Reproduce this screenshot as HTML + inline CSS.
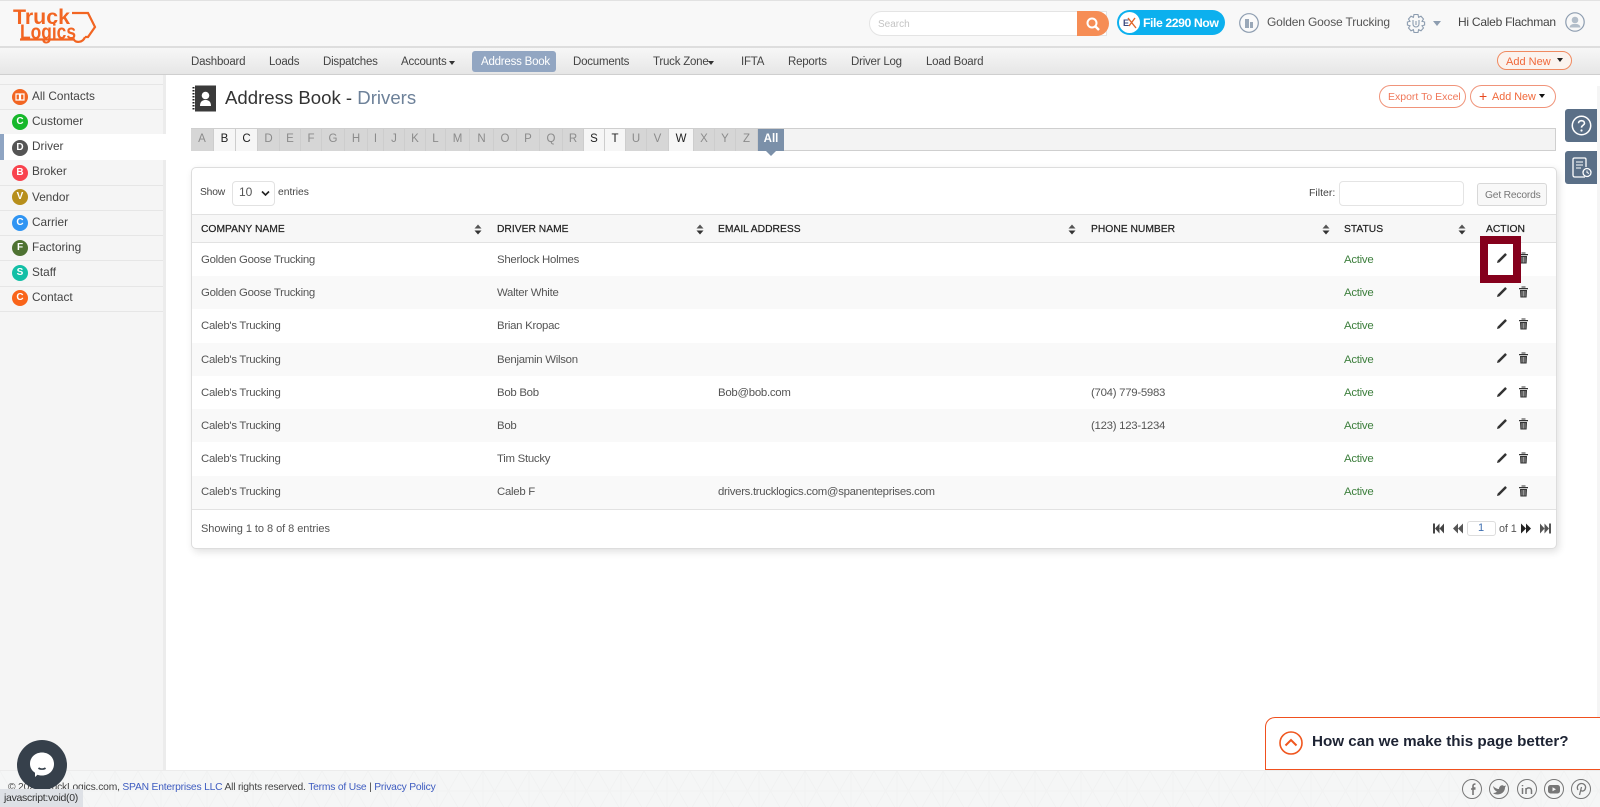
<!DOCTYPE html>
<html lang="en"><head><meta charset="utf-8"><title>Address Book - Drivers</title>
<style>
html,body{margin:0;padding:0;width:1600px;height:807px;overflow:hidden;background:#fff}
body{position:relative;font-family:"Liberation Sans",sans-serif;font-size:11.5px;color:#444}
.a{position:absolute}
.t{position:absolute;white-space:nowrap;line-height:16px}
.nav{font-size:11.5px;color:#444;top:54px;letter-spacing:-.22px}
.side{font-size:11.8px;color:#444;left:32px}
.ic{position:absolute;left:12px;width:16px;height:16px;border-radius:50%;color:#fff;font-size:10px;font-weight:bold;text-align:center;line-height:16px}
.sep{position:absolute;left:0;width:163px;height:1px;background:#e6e6e6}
.l{position:absolute;top:129px;height:22px;line-height:21px;text-align:center;font-size:11.5px;background:#d6d6d6;color:#8b8b8b;border-right:1px solid #cdcdcd;box-sizing:border-box}
.l.on{background:#f6f6f6;color:#222}
.h{font-size:10.3px;color:#222;top:222px;-webkit-text-stroke:.2px #222}
.c{font-size:11.4px;color:#555;letter-spacing:-.27px}
.s{position:absolute;top:224px;width:8px;height:11px}
.p{position:absolute;width:12px;height:12px}
.g{color:#3d7f3d}
a{color:#3e5cc0;text-decoration:none}
</style></head><body>

<!-- header -->
<div class="a" style="left:0;top:0;width:1600px;height:46px;background:#f8f8f8;border-top:1px solid #e2e2e2;box-sizing:border-box"></div>
<div class="a" style="left:0;top:46px;width:1600px;height:2px;background:#dedede"></div>
<div class="a" style="left:0;top:48px;width:1600px;height:27px;background:linear-gradient(#f7f7f7,#e6e6e6);border-bottom:1px solid #cfcfcf;box-sizing:border-box"></div>

<!-- logo -->
<svg class="a" style="left:10px;top:3px" width="92" height="42" viewBox="0 0 92 42">
<text x="3" y="21" font-family="Liberation Sans" font-weight="bold" font-size="21" fill="#f26522" textLength="57" lengthAdjust="spacingAndGlyphs">Truck</text>
<text x="10" y="36" font-family="Liberation Sans" font-weight="bold" font-size="21" fill="#f26522" textLength="56" lengthAdjust="spacingAndGlyphs">Logics</text>
<path d="M62 10H78L85 24L78 34H75M10 36.5H64C65 40 73 40 75 34" fill="none" stroke="#f26522" stroke-width="2.2"/>
</svg>

<!-- search -->
<div class="a" style="left:869px;top:11px;width:238px;height:25px;background:#fff;border:1px solid #e4e4e4;border-radius:13px 0 0 13px;box-sizing:border-box"></div>
<div class="t" style="left:878px;top:17px;font-size:10px;color:#c4c4c4">Search</div>
<div class="a" style="left:1077px;top:11px;width:32px;height:25px;background:#f68d55;border-radius:0 13px 13px 0"></div>
<svg class="a" style="left:1085px;top:16px" width="16" height="16" viewBox="0 0 16 16"><circle cx="7" cy="7" r="4.5" fill="none" stroke="#fff" stroke-width="2"/><path d="M10.5 10.5L14 14" stroke="#fff" stroke-width="2.4"/></svg>

<!-- file 2290 -->
<div class="a" style="left:1117px;top:10px;width:108px;height:25px;background:#0cb0ee;border-radius:13px"></div>
<svg class="a" style="left:1119px;top:12px" width="21" height="21" viewBox="0 0 21 21"><circle cx="10.5" cy="10.5" r="10.5" fill="#fff"/><text x="4" y="14" font-family="Liberation Sans" font-size="9" font-weight="bold" fill="#3a4a80">E</text><path d="M9 6L17 16M16 6L10 14" stroke="#e0662a" stroke-width="1.4"/></svg>
<div class="t" style="left:1143px;top:15px;font-size:12.3px;font-weight:bold;color:#fff;letter-spacing:-.45px">File 2290 Now</div>

<svg class="a" style="left:1239px;top:13px" width="20" height="20" viewBox="0 0 20 20"><circle cx="10" cy="10" r="9.3" fill="#fff" fill-opacity=".3" stroke="#8d9db0" stroke-width="1.2"/><path d="M6 15V6H10V15ZM11 15V9H14V15Z" fill="#9aa8b8"/></svg>
<div class="t" style="left:1267px;top:14px;font-size:12px;color:#555;letter-spacing:-.15px">Golden Goose Trucking</div>

<svg class="a" style="left:1406px;top:13px" width="20" height="21" viewBox="0 0 20 21" fill="none" stroke="#8d9db0" stroke-width="1.1"><path d="M8 1.5H12L12.6 4.3L15 3.2L17.5 6L16 8.3L18.6 9V12L16 12.8L17.5 15L15 17.8L12.6 16.7L12 19.5H8L7.4 16.7L5 17.8L2.5 15L4 12.8L1.4 12V9L4 8.3L2.5 6L5 3.2L7.4 4.3Z"/><path d="M7 7V11A3 3 0 0 0 13 11V7"/><path d="M10 8V12"/></svg>
<div class="a" style="left:1433px;top:21px;width:0;height:0;border-left:4px solid transparent;border-right:4px solid transparent;border-top:5px solid #8d9db0"></div>
<div class="t" style="left:1458px;top:14px;font-size:12px;color:#444;letter-spacing:-.25px">Hi Caleb Flachman</div>
<svg class="a" style="left:1565px;top:12px" width="20" height="20" viewBox="0 0 20 20"><circle cx="10" cy="10" r="9.2" fill="none" stroke="#8d9db0" stroke-width="1.2"/><circle cx="10" cy="8" r="3.3" fill="#b2bdc9"/><path d="M4.5 15.5C5 12 8 12 10 12S15 12 15.5 15.5Z" fill="#b2bdc9"/></svg>

<!-- nav -->
<div class="t nav" style="left:191px">Dashboard</div>
<div class="t nav" style="left:269px">Loads</div>
<div class="t nav" style="left:323px">Dispatches</div>
<div class="t nav" style="left:401px">Accounts</div>
<div class="a" style="left:449px;top:61px;width:0;height:0;border-left:3.5px solid transparent;border-right:3.5px solid transparent;border-top:4px solid #333"></div>
<div class="a" style="left:472px;top:51px;width:84px;height:21px;background:#92a6c2;border-radius:3px"></div>
<div class="t nav" style="left:481px;color:#fff">Address Book</div>
<div class="t nav" style="left:573px">Documents</div>
<div class="t nav" style="left:653px">Truck Zone</div>
<div class="a" style="left:708px;top:61px;width:0;height:0;border-left:3.5px solid transparent;border-right:3.5px solid transparent;border-top:4px solid #333"></div>
<div class="t nav" style="left:741px">IFTA</div>
<div class="t nav" style="left:788px">Reports</div>
<div class="t nav" style="left:851px">Driver Log</div>
<div class="t nav" style="left:926px">Load Board</div>
<div class="a" style="left:1497px;top:51px;width:75px;height:19px;border:1px solid #f08a60;border-radius:10px;box-sizing:border-box;background:#fbf3ee"></div>
<div class="t" style="left:1506px;top:54px;font-size:11px;color:#f0683a">Add New</div>
<div class="a" style="left:1557px;top:58px;width:0;height:0;border-left:3.5px solid transparent;border-right:3.5px solid transparent;border-top:4px solid #222"></div>

<!-- sidebar -->
<div class="a" style="left:0;top:75px;width:166px;height:695px;background:#f5f5f5;border-right:3px solid #ececec;box-sizing:border-box"></div>
<div class="sep" style="top:84px"></div><div class="sep" style="top:109px"></div><div class="sep" style="top:185px"></div><div class="sep" style="top:210px"></div><div class="sep" style="top:235px"></div><div class="sep" style="top:260px"></div><div class="sep" style="top:286px"></div><div class="sep" style="top:311px"></div>
<div class="a" style="left:0;top:134px;width:166px;height:26px;background:#fff"></div>
<div class="a" style="left:0;top:134px;width:4px;height:26px;background:#8fa5c3"></div>

<div class="ic" style="top:89px;background:#f26522"></div>
<svg class="a" style="left:15px;top:93px" width="10" height="8" viewBox="0 0 10 8"><path d="M1 1H4.5V7H1ZM5.5 1H9V7H5.5Z" fill="none" stroke="#fff" stroke-width="1.2"/></svg>
<div class="t side" style="top:88px">All Contacts</div>
<div class="ic" style="top:114px;background:#17b82b">C</div><div class="t side" style="top:113px">Customer</div>
<div class="ic" style="top:140px;background:#555">D</div><div class="t side" style="top:138px">Driver</div>
<div class="ic" style="top:165px;background:#f9434e">B</div><div class="t side" style="top:163px">Broker</div>
<div class="ic" style="top:189px;background:#b78f1c">V</div><div class="t side" style="top:189px">Vendor</div>
<div class="ic" style="top:215px;background:#2f94f3">C</div><div class="t side" style="top:214px">Carrier</div>
<div class="ic" style="top:240px;background:#4e7232">F</div><div class="t side" style="top:239px">Factoring</div>
<div class="ic" style="top:265px;background:#13bfa6">S</div><div class="t side" style="top:264px">Staff</div>
<div class="ic" style="top:290px;background:#f9641a">C</div><div class="t side" style="top:289px">Contact</div>

<!-- title -->
<svg class="a" style="left:192px;top:85px" width="25" height="27" viewBox="0 0 25 27"><rect x="3" y="0.5" width="21" height="26" fill="#3a3a3a"/><path d="M1.5 2V25" stroke="#222" stroke-width="2" stroke-dasharray="1.5 1.5"/><circle cx="13.5" cy="10.5" r="3.8" fill="#fff"/><path d="M8 21C8 16 11 15 13.5 15S19 16 19 21Z" fill="#fff"/></svg>
<div class="t" style="left:225px;top:88px;font-size:18.6px;line-height:20px;color:#333">Address Book - <span style="color:#6d8199">Drivers</span></div>

<div class="a" style="left:1379px;top:85px;width:87px;height:23px;border:1px solid #f0947a;border-radius:12px;box-sizing:border-box"></div>
<div class="t" style="left:1388px;top:89px;font-size:10.5px;color:#f0785a">Export To Excel</div>
<div class="a" style="left:1470px;top:85px;width:86px;height:23px;border:1px solid #f0947a;border-radius:12px;box-sizing:border-box"></div>
<div class="t" style="left:1479px;top:88px;font-size:14px;color:#e8481f">+</div>
<div class="t" style="left:1492px;top:89px;font-size:10.8px;color:#f0683a">Add New</div>
<div class="a" style="left:1539px;top:94px;width:0;height:0;border-left:3.5px solid transparent;border-right:3.5px solid transparent;border-top:4px solid #111"></div>

<!-- side buttons -->
<div class="a" style="left:1597px;top:86px;width:3px;height:684px;background:#f5f5f5"></div>
<div class="a" style="left:1565px;top:109px;width:32px;height:33px;background:#5a6f87;border-radius:3px 0 0 3px"></div>
<svg class="a" style="left:1571px;top:115px" width="21" height="21" viewBox="0 0 21 21"><circle cx="10.5" cy="10.5" r="9.2" fill="none" stroke="#fff" stroke-width="1.5"/><path d="M7.5 8.2C7.5 4.8 13.5 4.8 13.5 8.2C13.5 10.3 10.5 10.3 10.5 12.6" fill="none" stroke="#fff" stroke-width="1.6"/><circle cx="10.5" cy="15.5" r="1.1" fill="#fff"/></svg>
<div class="a" style="left:1565px;top:151px;width:32px;height:33px;background:#5a6f87;border-radius:3px 0 0 3px"></div>
<svg class="a" style="left:1571px;top:157px" width="22" height="22" viewBox="0 0 22 22" fill="none" stroke="#fff" stroke-width="1.3"><path d="M14 20H4C2.5 20 2 19.5 2 18V2.5C2 1.5 2.5 1 3.5 1H13.5C14.5 1 15 1.5 15 2.5V10"/><path d="M5 5H12M5 8H12M5 11H10" stroke-width="1.1"/><circle cx="16" cy="15.5" r="4" fill="#5a6f87"/><path d="M16 13.5V15.5L18 16.5" stroke-width="1"/></svg>

<!-- alphabet -->
<div class="a" style="left:191px;top:128px;width:1365px;height:23px;background:#f3f3f3;border:1px solid #cfcfcf;box-sizing:border-box"></div>
<div class="l" style="left:191px;width:23px">A</div>
<div class="l on" style="left:214px;width:22px">B</div>
<div class="l on" style="left:236px;width:22px">C</div>
<div class="l" style="left:258px;width:22px">D</div>
<div class="l" style="left:280px;width:21px">E</div>
<div class="l" style="left:301px;width:21px">F</div>
<div class="l" style="left:322px;width:23px">G</div>
<div class="l" style="left:345px;width:23px">H</div>
<div class="l" style="left:368px;width:16px">I</div>
<div class="l" style="left:384px;width:21px">J</div>
<div class="l" style="left:405px;width:21px">K</div>
<div class="l" style="left:426px;width:20px">L</div>
<div class="l" style="left:446px;width:24px">M</div>
<div class="l" style="left:470px;width:24px">N</div>
<div class="l" style="left:494px;width:23px">O</div>
<div class="l" style="left:517px;width:23px">P</div>
<div class="l" style="left:540px;width:23px">Q</div>
<div class="l" style="left:563px;width:21px">R</div>
<div class="l on" style="left:584px;width:21px">S</div>
<div class="l on" style="left:605px;width:21px">T</div>
<div class="l" style="left:626px;width:21px">U</div>
<div class="l" style="left:647px;width:22px">V</div>
<div class="l on" style="left:669px;width:25px">W</div>
<div class="l" style="left:694px;width:21px">X</div>
<div class="l" style="left:715px;width:21px">Y</div>
<div class="l" style="left:736px;width:22px">Z</div>
<div class="l" style="left:758px;width:26px;background:#7b90a9;color:#fff;font-weight:bold;border:0">All</div>
<div class="a" style="left:766px;top:151px;width:0;height:0;border-left:5px solid transparent;border-right:5px solid transparent;border-top:5px solid #7b90a9"></div>

<!-- card -->
<div class="a" style="left:191px;top:167px;width:1366px;height:382px;background:#fff;border:1px solid #ddd;border-radius:5px;box-sizing:border-box;box-shadow:2px 3px 8px rgba(0,0,0,.12)"></div>
<div class="t" style="left:200px;top:185px;font-size:10.3px;color:#444;letter-spacing:-.2px">Show</div>
<div class="a" style="left:232px;top:181px;width:43px;height:25px;border:1px solid #e2e2e2;border-radius:4px;box-sizing:border-box"></div>
<div class="t" style="left:239px;top:184px;font-size:12px;color:#555">10</div>
<svg class="a" style="left:261px;top:190px" width="9" height="7" viewBox="0 0 9 7"><path d="M1 1.5L4.5 5L8 1.5" fill="none" stroke="#222" stroke-width="1.6"/></svg>
<div class="t" style="left:278px;top:185px;font-size:10.3px;color:#444">entries</div>
<div class="t" style="left:1309px;top:185px;font-size:10.5px;color:#444">Filter:</div>
<div class="a" style="left:1339px;top:181px;width:125px;height:25px;border:1px solid #e4e4e4;border-radius:4px;box-sizing:border-box"></div>
<div class="a" style="left:1477px;top:183px;width:70px;height:23px;border:1px solid #d8d8d8;border-radius:3px;box-sizing:border-box;background:#f8f8f8"></div>
<div class="t" style="left:1485px;top:188px;font-size:10.3px;color:#777;letter-spacing:-.2px">Get Records</div>

<div class="a" style="left:192px;top:214px;width:1364px;height:29px;background:#f7f7f7;border-top:1px solid #e2e2e2;border-bottom:1px solid #e2e2e2;box-sizing:border-box"></div>
<div class="t h" style="left:201px">COMPANY NAME</div>
<div class="t h" style="left:497px">DRIVER NAME</div>
<div class="t h" style="left:718px">EMAIL ADDRESS</div>
<div class="t h" style="left:1091px">PHONE NUMBER</div>
<div class="t h" style="left:1344px">STATUS</div>
<div class="t h" style="left:1486px">ACTION</div>
<svg width="0" height="0" style="position:absolute"><defs>
<g id="so"><path d="M4 0.5L7.5 4.5H0.5Z" fill="#555"/><path d="M4 10.5L7.5 6.5H0.5Z" fill="#333"/></g>
<g id="pe"><path d="M1 11L1.6 8.6L8.6 1.6C9 1.2 9.5 1.2 9.9 1.6L10.4 2.1C10.8 2.5 10.8 3 10.4 3.4L3.4 10.4Z" fill="#333"/></g>
<g id="tr"><path d="M3.5 1.5H7.5V.5H3.5ZM1 2H10V3.3H1ZM2 4H9L8.6 11.5H2.4Z" fill="#333"/><path d="M4 5V10.5M5.5 5V10.5M7 5V10.5" stroke="#fff" stroke-width=".5"/></g>
<pattern id="ft" width="46" height="40" patternUnits="userSpaceOnUse"><path d="M0 0L23 40L46 0M0 40L23 0L46 40M0 20H46M23 0V40" fill="none" stroke="#f1f2f2" stroke-width="1"/></pattern>
</defs></svg>
<svg class="s" style="left:474px"><use href="#so"/></svg>
<svg class="s" style="left:696px"><use href="#so"/></svg>
<svg class="s" style="left:1068px"><use href="#so"/></svg>
<svg class="s" style="left:1322px"><use href="#so"/></svg>
<svg class="s" style="left:1458px"><use href="#so"/></svg>

<!-- stripes -->
<div class="a" style="left:192px;top:276px;width:1364px;height:33px;background:#f9f9f9"></div>
<div class="a" style="left:192px;top:343px;width:1364px;height:33px;background:#f9f9f9"></div>
<div class="a" style="left:192px;top:409px;width:1364px;height:33px;background:#f9f9f9"></div>
<div class="a" style="left:192px;top:476px;width:1364px;height:33px;background:#f9f9f9"></div>
<div class="a" style="left:192px;top:509px;width:1364px;height:1px;background:#e2e2e2"></div>

<!-- rows -->
<div class="t c" style="left:201px;top:252px">Golden Goose Trucking</div><div class="t c" style="left:497px;top:252px">Sherlock Holmes</div><div class="t c g" style="left:1344px;top:252px">Active</div>
<div class="t c" style="left:201px;top:285px">Golden Goose Trucking</div><div class="t c" style="left:497px;top:285px">Walter White</div><div class="t c g" style="left:1344px;top:285px">Active</div>
<div class="t c" style="left:201px;top:318px">Caleb's Trucking</div><div class="t c" style="left:497px;top:318px">Brian Kropac</div><div class="t c g" style="left:1344px;top:318px">Active</div>
<div class="t c" style="left:201px;top:352px">Caleb's Trucking</div><div class="t c" style="left:497px;top:352px">Benjamin Wilson</div><div class="t c g" style="left:1344px;top:352px">Active</div>
<div class="t c" style="left:201px;top:385px">Caleb's Trucking</div><div class="t c" style="left:497px;top:385px">Bob Bob</div><div class="t c" style="left:718px;top:385px">Bob@bob.com</div><div class="t c" style="left:1091px;top:385px">(704) 779-5983</div><div class="t c g" style="left:1344px;top:385px">Active</div>
<div class="t c" style="left:201px;top:418px">Caleb's Trucking</div><div class="t c" style="left:497px;top:418px">Bob</div><div class="t c" style="left:1091px;top:418px">(123) 123-1234</div><div class="t c g" style="left:1344px;top:418px">Active</div>
<div class="t c" style="left:201px;top:451px">Caleb's Trucking</div><div class="t c" style="left:497px;top:451px">Tim Stucky</div><div class="t c g" style="left:1344px;top:451px">Active</div>
<div class="t c" style="left:201px;top:484px">Caleb's Trucking</div><div class="t c" style="left:497px;top:484px">Caleb F</div><div class="t c" style="left:718px;top:484px;letter-spacing:-.3px">drivers.trucklogics.com@spanenteprises.com</div><div class="t c g" style="left:1344px;top:484px">Active</div>

<!-- actions -->
<svg class="p" style="left:1518px;top:252px;height:13px"><use href="#tr"/></svg>
<svg class="p" style="left:1496px;top:286px"><use href="#pe"/></svg><svg class="p" style="left:1518px;top:286px;height:13px"><use href="#tr"/></svg>
<svg class="p" style="left:1496px;top:318px"><use href="#pe"/></svg><svg class="p" style="left:1518px;top:318px;height:13px"><use href="#tr"/></svg>
<svg class="p" style="left:1496px;top:352px"><use href="#pe"/></svg><svg class="p" style="left:1518px;top:352px;height:13px"><use href="#tr"/></svg>
<svg class="p" style="left:1496px;top:386px"><use href="#pe"/></svg><svg class="p" style="left:1518px;top:386px;height:13px"><use href="#tr"/></svg>
<svg class="p" style="left:1496px;top:418px"><use href="#pe"/></svg><svg class="p" style="left:1518px;top:418px;height:13px"><use href="#tr"/></svg>
<svg class="p" style="left:1496px;top:452px"><use href="#pe"/></svg><svg class="p" style="left:1518px;top:452px;height:13px"><use href="#tr"/></svg>
<svg class="p" style="left:1496px;top:485px"><use href="#pe"/></svg><svg class="p" style="left:1518px;top:485px;height:13px"><use href="#tr"/></svg>

<!-- highlight box -->
<div class="a" style="left:1480px;top:236px;width:41px;height:47px;border:8px solid #85001c;box-sizing:border-box;background:#fff"></div>
<svg class="p" style="left:1496px;top:252px"><use href="#pe"/></svg>

<!-- card footer -->
<div class="t" style="left:201px;top:521px;font-size:11px;color:#555;letter-spacing:-.05px">Showing 1 to 8 of 8 entries</div>
<svg class="a" style="left:1433px;top:523px" width="150" height="11" viewBox="0 0 150 11" fill="#444">
<path d="M0 .5H2V10.5H0ZM2 5.5L6.5 .5V10.5ZM6.5 5.5L11 .5V10.5Z"/><path d="M20 5.5L25 .5V10.5ZM25 5.5L30 .5V10.5Z" fill="#555"/>
<path d="M88 .5L93 5.5L88 10.5ZM93 .5L98 5.5L93 10.5Z" fill="#222"/><path d="M107 .5L111.5 5.5L107 10.5ZM111.5 .5L116 5.5L111.5 10.5ZM116 .5H118V10.5H116Z" fill="#555"/></svg>
<div class="a" style="left:1467px;top:521px;width:29px;height:15px;border:1px solid #ddd;border-radius:3px;box-sizing:border-box"></div>
<div class="t" style="left:1478px;top:520px;font-size:11px;color:#3f6fb0">1</div>
<div class="t" style="left:1499px;top:521px;font-size:10.8px;color:#555;letter-spacing:-.1px">of 1</div>

<!-- footer -->
<div class="a" style="left:0;top:770px;width:1600px;height:37px;background:#f5f6f6;border-top:1px solid #ececec;box-sizing:border-box"></div>
<svg class="a" style="left:0;top:771px" width="1600" height="36"><rect width="1600" height="36" fill="url(#ft)"/></svg>
<div class="t" style="left:8px;top:780px;font-size:10.3px;color:#444;letter-spacing:-.2px">© 2021 TruckLogics.com, <a>SPAN Enterprises LLC</a> All rights reserved. <a>Terms of Use</a> | <a>Privacy Policy</a></div>
<svg class="a" style="left:1460px;top:777px" width="134" height="24" viewBox="0 0 134 24" fill="none" stroke="#777" stroke-width="1">
<circle cx="12" cy="12" r="9.5"/><circle cx="39" cy="12" r="9.5"/><circle cx="67" cy="12" r="9.5"/><circle cx="94" cy="12" r="9.5"/><circle cx="121" cy="12" r="9.5"/>
<path d="M13 18V11H15.5M11 12H15.5M13 11V9C13 7.5 14 7 15.5 7" stroke-width="1.6"/>
<path d="M33 9C35 11 37 12 39 12C39 9 42 7 44 9L46 8.5L45 10.5C45 15 41 17.5 37.5 17.5C35.5 17.5 34 17 33 16C35 16 36 15.5 37 14.5C35 14 33.5 11.5 33 9Z" fill="#777" stroke="none"/>
<path d="M62.5 11V17M62.5 8V9.2M66 17V11M66 13.5C66 10 71.5 10 71.5 13.5V17" stroke-width="1.5"/>
<rect x="88" y="8" width="12" height="8.5" rx="2.5" fill="#777" stroke="none"/><path d="M92.5 10.2V14.2L96 12.2Z" fill="#f5f6f6" stroke="none"/>
<path d="M119.5 18L121.5 10M118 13C116 9 119 6.5 121.5 6.5C124 6.5 126 8.5 125.5 11C125 14 122 15 120.5 13" stroke-width="1.3"/>
</svg>

<!-- feedback -->
<div class="a" style="left:1265px;top:717px;width:340px;height:53px;border:1.5px solid #f0501e;border-radius:10px 0 0 0;background:#fff;box-sizing:border-box"></div>
<svg class="a" style="left:1279px;top:731px" width="24" height="24" viewBox="0 0 24 24" fill="none" stroke="#f0561e" stroke-width="1.6"><circle cx="12" cy="12" r="11"/><path d="M6.5 14.5L12 9L17.5 14.5" stroke-width="2"/></svg>
<div class="t" style="left:1312px;top:734px;font-size:15.2px;font-weight:bold;color:#1d2333">How can we make this page better?</div>

<!-- chat -->
<div class="a" style="left:17px;top:740px;width:50px;height:50px;background:#36404b;border-radius:50%"></div>
<svg class="a" style="left:28px;top:751px" width="28" height="28" viewBox="0 0 28 28"><path d="M14 1.5C21 1.5 26 6.5 26 13S21 24.5 14 24.5C12.5 24.5 11 24.3 9.5 23.7L7 26V21.8C3.8 19.6 2 16.5 2 13C2 6.5 7 1.5 14 1.5Z" fill="#fff"/><path d="M10.5 17C12 18.5 16 18.5 17.5 17" fill="none" stroke="#36404b" stroke-width="1.6"/></svg>

<!-- status bar -->
<div class="a" style="left:0;top:789px;width:83px;height:18px;background:#dee1e6"></div>
<div class="t" style="left:4px;top:790px;font-size:10.5px;color:#333;letter-spacing:-.3px">javascript:void(0)</div>
</body></html>
